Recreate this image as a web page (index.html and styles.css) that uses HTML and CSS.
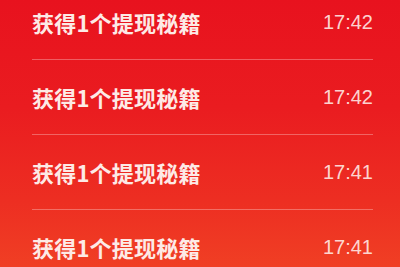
FILE: index.html
```html
<!DOCTYPE html>
<html lang="zh">
<head>
<meta charset="utf-8">
<link rel="stylesheet" href="styles.css">
</head>
<body>
<div class="page">
  <ul class="list">
    <li class="row"><span class="title">获得1个提现秘籍</span><span class="time">17:42</span></li>
    <li class="row"><span class="title">获得1个提现秘籍</span><span class="time">17:42</span></li>
    <li class="row"><span class="title">获得1个提现秘籍</span><span class="time">17:41</span></li>
    <li class="row"><span class="title">获得1个提现秘籍</span><span class="time">17:41</span></li>
  </ul>
</div>
</body>
</html>
```

FILE: styles.css
```css
html, body {
  margin: 0;
  padding: 0;
  height: 100%;
  overflow: hidden;
}
.page {
  width: 400px;
  height: 267px;
  overflow: hidden;
  background: linear-gradient(180deg, #e8121e 0%, #ea1c20 40%, #ed2e22 75%, #f03f24 100%);
}
.list {
  list-style: none;
  margin: -15px 0 0 0;
  padding: 0 27px 0 32px;
}
.row {
  height: 74px;
  display: flex;
  align-items: center;
  justify-content: space-between;
  border-bottom: 1px solid rgba(255, 255, 255, 0.3);
}
.title {
  font-family: "Noto Sans CJK SC", sans-serif;
  font-weight: 700;
  font-size: 22px;
  letter-spacing: 0.2px;
  color: #fdeae6;
}
.time {
  font-family: "Liberation Sans", Arial, sans-serif;
  font-size: 20px;
  color: rgba(255, 236, 232, 0.9);
}
```
